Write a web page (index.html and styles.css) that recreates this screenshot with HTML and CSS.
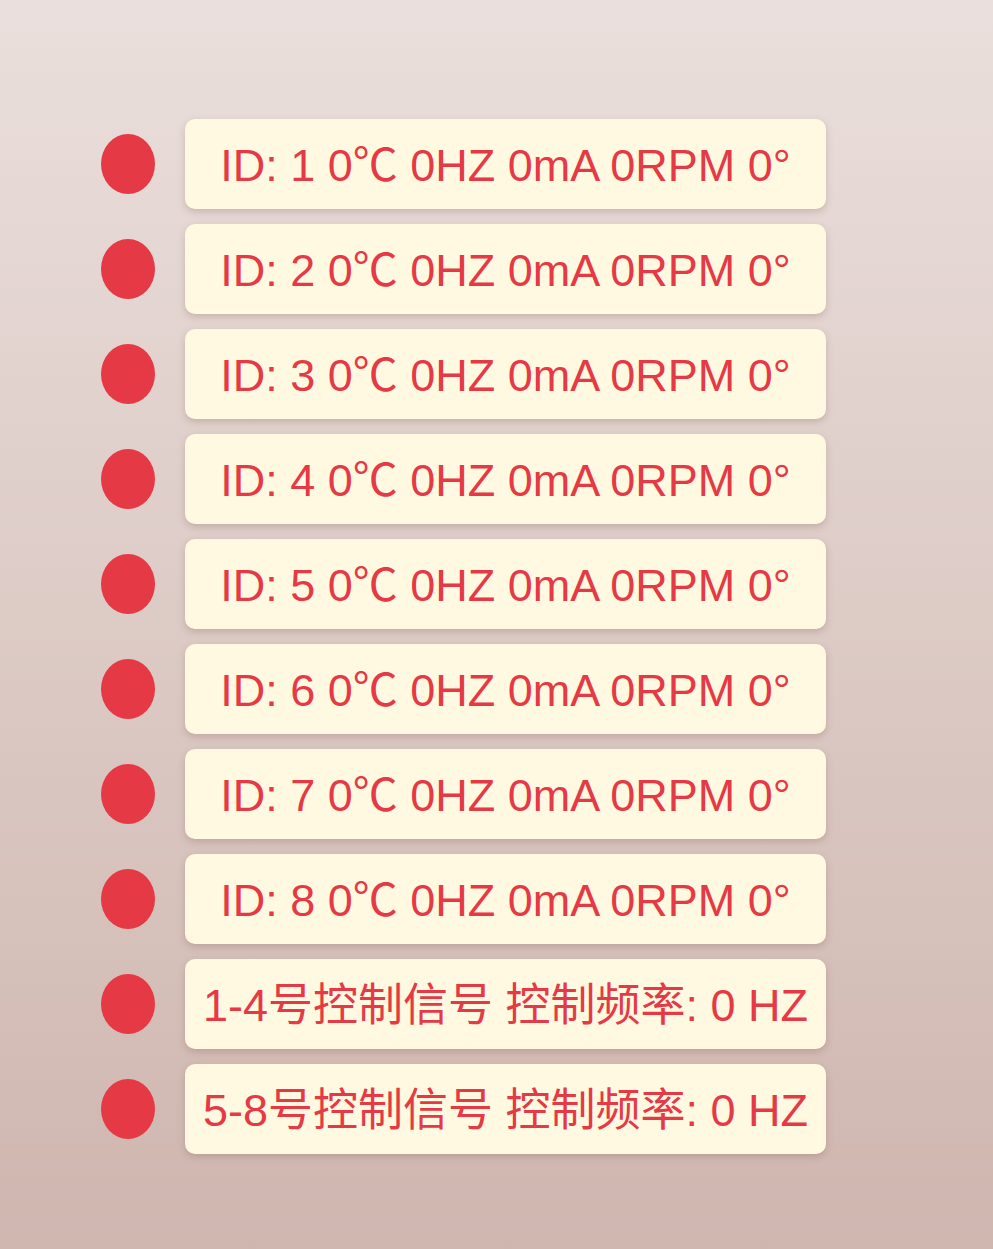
FILE: index.html
```html
<!DOCTYPE html>
<html>
<head>
    <meta charset="utf-8">
    <title>电机状态</title>
    <link rel="stylesheet" href="styles.css">
</head>
<body>
    <div class="lista-motores">
        <div class="fila"><span class="led"></span><div class="tarjeta">ID: 1 0℃ 0HZ 0mA 0RPM 0°</div></div>
        <div class="fila"><span class="led"></span><div class="tarjeta">ID: 2 0℃ 0HZ 0mA 0RPM 0°</div></div>
        <div class="fila"><span class="led"></span><div class="tarjeta">ID: 3 0℃ 0HZ 0mA 0RPM 0°</div></div>
        <div class="fila"><span class="led"></span><div class="tarjeta">ID: 4 0℃ 0HZ 0mA 0RPM 0°</div></div>
        <div class="fila"><span class="led"></span><div class="tarjeta">ID: 5 0℃ 0HZ 0mA 0RPM 0°</div></div>
        <div class="fila"><span class="led"></span><div class="tarjeta">ID: 6 0℃ 0HZ 0mA 0RPM 0°</div></div>
        <div class="fila"><span class="led"></span><div class="tarjeta">ID: 7 0℃ 0HZ 0mA 0RPM 0°</div></div>
        <div class="fila"><span class="led"></span><div class="tarjeta">ID: 8 0℃ 0HZ 0mA 0RPM 0°</div></div>
        <div class="fila"><span class="led"></span><div class="tarjeta">1-4号控制信号 控制频率: 0 HZ</div></div>
        <div class="fila"><span class="led"></span><div class="tarjeta">5-8号控制信号 控制频率: 0 HZ</div></div>
    </div>
</body>
</html>
```

FILE: styles.css
```css
body {
    margin: 0;
    min-height: 1249px;
    font-family: "Liberation Sans", "Noto Sans CJK SC", sans-serif;
    background: linear-gradient(to bottom, #eadfdc, #cfb6af);
}

.lista-motores {
    display: flex;
    flex-direction: column;
    gap: 15px;
    padding: 119px 0 0 101px;
}

.fila {
    display: flex;
    align-items: center;
    gap: 30px;
}

/* indicador de estado */
.led {
    width: 54px;
    height: 60px;
    border-radius: 50%;
    background-color: #e63946;
}

.tarjeta {
    width: 641px;
    height: 90px;
    box-sizing: border-box;
    padding-bottom: 5px;
    display: flex;
    align-items: center;
    justify-content: center;
    white-space: nowrap;
    background-color: #fef9e0;
    border-radius: 10px;
    box-shadow: 0 3px 7px rgba(120, 80, 70, 0.25);
    color: #e63946;
    font-size: 45px;
}
```
